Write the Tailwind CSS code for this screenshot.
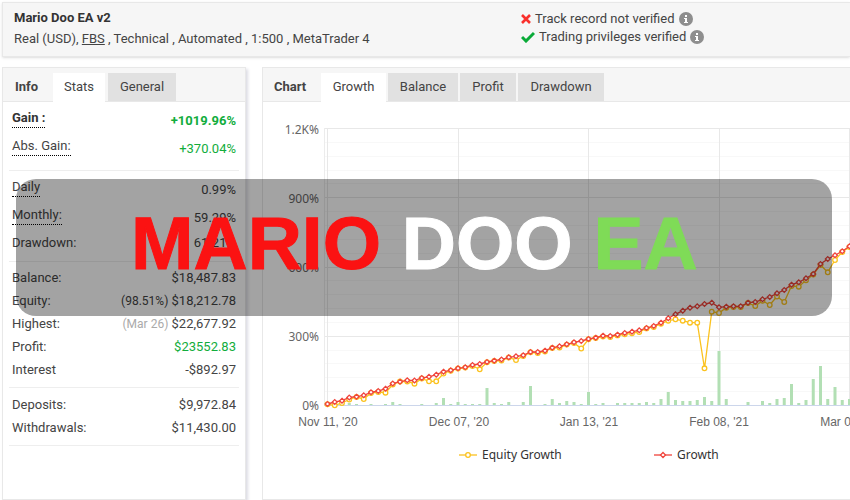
<!DOCTYPE html>
<html lang="en">
<head>
  <meta charset="UTF-8">
  <meta name="viewport" content="width=device-width, initial-scale=1.0">
  <title>Mario Doo EA v2</title>
  <script src="https://cdn.jsdelivr.net/npm/@tailwindcss/browser@4"></script>
</head>
<body class="relative bg-white font-['Roboto',sans-serif] text-[13px] text-[#444] overflow-hidden">
  <header class="ml-[2px] mt-[2px] flex h-[55px] border border-r-0 border-[#e8e8e8] bg-[#f6f6f6] pl-[11px] pt-1 leading-[21px] shadow-sm">
    <div class="w-[507px] shrink-0">
      <h1 class="font-bold text-[#333]">Mario Doo EA v2</h1>
      <p>Real (USD), <a href="#" class="underline">FBS</a> , Technical , Automated , 1:500 , MetaTrader 4</p>
    </div>
    <ul class="pt-[3px] leading-[18px]">
      <li class="flex items-center gap-1">
        <svg class="size-[10px]" viewBox="0 0 10 10"><path d="M1 1l8 8M9 1l-8 8" stroke="#f9302c" stroke-width="2.6"/></svg>
        Track record not verified
        <svg class="size-[14px]" viewBox="0 0 14 14"><circle cx="7" cy="7" r="7" fill="#8e8e8e"/><path d="M6 3h2v2H6zM5 6h3v4h1v1H5v-1h1V7H5z" fill="#fff"/></svg>
      </li>
      <li class="flex items-center gap-1">
        <svg class="h-[12px] w-[14px]" viewBox="0 0 14 12"><path d="M1 6l4 4 8-8" fill="none" stroke="#0aaa38" stroke-width="3"/></svg>
        Trading privileges verified
        <svg class="size-[14px]" viewBox="0 0 14 14"><circle cx="7" cy="7" r="7" fill="#8e8e8e"/><path d="M6 3h2v2H6zM5 6h3v4h1v1H5v-1h1V7H5z" fill="#fff"/></svg>
      </li>
    </ul>
  </header>

  <main class="mt-[10px] flex gap-4 pl-[2px]">
    <section class="h-[433px] w-[244px] shrink-0 border border-[#e8e8e8] shadow-[2px_2px_3px_#dcdce4]">
      <div class="flex h-[34px] items-end border-b border-[#e8e8e8] bg-[#f6f6f6]">
        <h2 class="w-[50px] pl-3 font-bold leading-7">Info</h2>
        <button class="-mb-px h-[29px] w-[52px] bg-white pb-[2px]">Stats</button>
        <button class="ml-[3px] h-[28px] w-[68px] bg-[#e1e1e1]">General</button>
      </div>
      <div class="px-[6px] leading-[14px]">
        <dl class="border-b border-[#eee] px-[3px] pb-[14px] pt-[9px]">
          <div class="flex items-end justify-between font-bold">
            <dt class="border-b border-dotted border-black pb-[2px] text-[#333]">Gain :</dt><dd class="text-[#12ad3c]">+1019.96%</dd>
          </div>
          <div class="mt-[11px] flex items-end justify-between">
            <dt class="border-b border-dotted border-black pb-[2px]">Abs. Gain:</dt><dd class="text-[#12ad3c]">+370.04%</dd>
          </div>
        </dl>
        <dl class="border-b border-[#eee] px-[3px] pb-[11px] pt-[9px]">
          <div class="flex items-end justify-between">
            <dt class="border-b border-dotted border-black pb-[2px]">Daily</dt><dd>0.99%</dd>
          </div>
          <div class="mt-[11px] flex items-end justify-between">
            <dt class="border-b border-dotted border-black pb-[2px]">Monthly:</dt><dd>59.29%</dd>
          </div>
          <div class="mt-[11px] flex justify-between"><dt>Drawdown:</dt><dd>61.21%</dd></div>
        </dl>
        <dl class="space-y-[9px] border-b border-[#eee] px-[3px] pb-[10px] pt-[9px]">
          <div class="flex justify-between"><dt>Balance:</dt><dd>$18,487.83</dd></div>
          <div class="flex justify-between"><dt>Equity:</dt><dd><span class="text-xs leading-[14px]">(98.51%)</span> $18,212.78</dd></div>
          <div class="flex justify-between"><dt>Highest:</dt><dd><span class="text-xs leading-[14px] text-[#aaa]">(Mar 26)</span> $22,677.92</dd></div>
          <div class="flex justify-between"><dt>Profit:</dt><dd class="text-[#12ad3c]">$23552.83</dd></div>
          <div class="flex justify-between"><dt>Interest</dt><dd>-$892.97</dd></div>
        </dl>
        <dl class="space-y-[9px] border-b border-[#eee] px-[3px] pb-[10px] pt-[10px]">
          <div class="flex justify-between"><dt>Deposits:</dt><dd>$9,972.84</dd></div>
          <div class="flex justify-between"><dt>Withdrawals:</dt><dd>$11,430.00</dd></div>
        </dl>
      </div>
    </section>

    <section class="h-[433px] min-w-0 flex-1 overflow-hidden border border-r-0 border-[#e8e8e8]">
      <div class="flex h-[34px] items-end gap-[2px] border-b border-[#e8e8e8] bg-[#f6f6f6]">
        <h2 class="w-[56px] pl-[11px] font-bold leading-7">Chart</h2>
        <button class="-mb-px h-[29px] w-[65px] bg-white pb-[2px]">Growth</button>
        <button class="h-[28px] w-[70px] bg-[#e1e1e1]">Balance</button>
        <button class="h-[28px] w-[56px] bg-[#e1e1e1]">Profit</button>
        <button class="h-[28px] w-[86px] bg-[#e1e1e1]">Drawdown</button>
      </div>
      <svg id="chart" class="block h-[390px] w-[590px]" viewBox="263 102 590 390">
        <g id="grid"></g>
        <g id="bars" fill="#b2dfb4"></g>
        <path d="M324 405.5H853" stroke="#ccd6eb"/>
        <g id="lines"></g>
        <g class="font-['Noto_Sans',sans-serif] text-xs" fill="#666" text-anchor="end">
          <text x="319" y="134">1.2K%</text>
          <text x="319" y="203">900%</text>
          <text x="319" y="272">600%</text>
          <text x="319" y="341">300%</text>
          <text x="319" y="410">0%</text>
        </g>
        <g class="font-['Liberation_Sans',sans-serif] text-xs" fill="#666" text-anchor="middle">
          <text x="328" y="426">Nov 11, '20</text>
          <text x="459" y="426">Dec 07, '20</text>
          <text x="589" y="426">Jan 13, '21</text>
          <text x="719" y="426">Feb 08, '21</text>
          <text x="850" y="426">Mar 08, '21</text>
        </g>
        <g class="font-['Noto_Sans',sans-serif] text-xs" fill="#333">
          <path d="M459 455H477" stroke="#fbc21f" stroke-width="1.3"/>
          <circle cx="468" cy="455" r="2.3" fill="#fff" stroke="#fbc21f" stroke-width="1.3"/>
          <text x="482" y="459">Equity Growth</text>
          <path d="M654 455H672" stroke="#f0433b" stroke-width="1.3"/>
          <path d="M663 452.5l2.5 2.5-2.5 2.5-2.5-2.5z" fill="#fff" stroke="#f0433b" stroke-width="1.3"/>
          <text x="677" y="459">Growth</text>
        </g>
      </svg>
    </section>
  </main>

  <div class="absolute left-4 right-[18px] top-[179px] flex h-[137px] items-center rounded-[20px] bg-black/36 pb-2 pl-[115px]">
    <p class="whitespace-nowrap font-['Liberation_Sans',sans-serif] text-[75px] font-bold leading-none text-white [-webkit-text-stroke:1px]"><span class="text-[#fb1212]">MARIO</span> DOO <span class="text-[#7fdb57]">EA</span></p>
  </div>

<script>
  const growth = [404,402,400.7,397.5,396.7,395.3,392.3,391,388.7,383.5,381.7,380.3,380.5,378,376.8,374.7,371.7,370.3,368.3,367.3,365,364,362,360.7,359.5,357.3,356.3,355.3,352,352,350.7,347.7,346.3,344.3,342.3,341,339,337.7,335.7,336,334.7,333,331.7,330.3,328,326,322.7,318.3,314.3,310.7,307.7,306.3,304,302.7,307.3,306.7,306.3,306.3,302.7,302,299.3,297,293.3,290,284.7,282.3,278.3,274,264,259,255.3,251.3,246.3];
  const equity = [404.3,405.3,403,399.5,397,399,393,392,392.7,384.5,381.5,381.5,383.7,378.5,381.3,381.3,373.5,370.7,368.5,367.6,366,369.3,362.3,361,360.5,357.5,360,356,352.3,353,351.5,348,347.5,344.6,343,348.5,339.3,338,336.5,337,335.4,334.3,333.3,332,328.4,327,323.7,320.7,319.3,320.7,322.7,322.7,368.3,311.7,313,307.7,307,307,303,306,300.8,305,296.5,302,286,286.7,280.3,274.5,265,272.3,260,252,247];
  const bars = [0,0,0,2,1,0,1,0,1,3,1,0,0,1,0,2,7,1,3,1,1,1,17,2,1,3,0,3,19,0,1,6,2,4,3,1,13,1,2,0,2,2,2,2,3,2,6,13,5,4,4,5,8,4,54,6,0,0,3,0,4,2,6,7,21,2,5,26,39,6,18,5,6];
  const px = i => 327.5 + i * 7.25;

  // grid: a darker line every 300%, four faint ones in between
  let grid = '';
  for (let i = 1; i <= 20; i++) {
    const y = Math.round(405 - i * 13.85) + 0.5;
    grid += `<path d="M324 ${y}H853" stroke="${i % 5 ? '#f8f8f8' : '#e8e8e8'}"/>`;
  }
  grid += '<path d="M324.5 128V405" stroke="#ececec"/>';
  for (let i = 0; i <= 72; i += 18) {
    grid += `<path d="M${Math.floor(px(i)) + 0.5} 128V405" stroke="#e8e8e8"/>`;
  }
  document.getElementById('grid').innerHTML = grid;

  document.getElementById('bars').innerHTML = bars.map((h, i) =>
    h ? `<rect x="${px(i) - 1.5}" y="${405 - h}" width="3" height="${h}"/>` : '').join('');

  const line = (data, color) =>
    `<polyline points="${data.map((y, i) => px(i) + ',' + y).join(' ')}" fill="none" stroke="${color}" stroke-width="1.3"/>`;
  document.getElementById('lines').innerHTML =
    line(equity, '#fbc21f') +
    equity.map((y, i) => `<circle cx="${px(i)}" cy="${y}" r="2.3" fill="#fff" stroke="#fbc21f" stroke-width="1.3"/>`).join('') +
    line(growth, '#f0433b') +
    growth.map((y, i) => `<path d="M${px(i)} ${y - 2.4}l2.4 2.4-2.4 2.4-2.4-2.4z" fill="#fff" stroke="#f0433b" stroke-width="1.3"/>`).join('');
</script>
</body>
</html>
